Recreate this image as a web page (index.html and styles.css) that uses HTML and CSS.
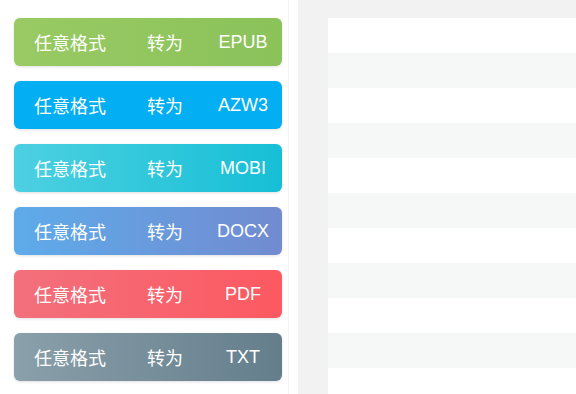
FILE: index.html
```html
<!DOCTYPE html>
<html lang="zh-CN">
<head>
    <meta charset="UTF-8">
    <meta name="viewport" content="width=device-width, initial-scale=1.0">
    <title>格式转换</title>
    <link rel="stylesheet" href="styles.css">
</head>
<body>
    <div class="page">
        <div class="sidebar">
            <div class="buttons">
                <a class="convert epub" href="#"><span class="from">任意格式</span><span class="to">转为</span><span class="format">EPUB</span></a>
                <a class="convert azw3" href="#"><span class="from">任意格式</span><span class="to">转为</span><span class="format">AZW3</span></a>
                <a class="convert mobi" href="#"><span class="from">任意格式</span><span class="to">转为</span><span class="format">MOBI</span></a>
                <a class="convert docx" href="#"><span class="from">任意格式</span><span class="to">转为</span><span class="format">DOCX</span></a>
                <a class="convert pdf" href="#"><span class="from">任意格式</span><span class="to">转为</span><span class="format">PDF</span></a>
                <a class="convert txt" href="#"><span class="from">任意格式</span><span class="to">转为</span><span class="format">TXT</span></a>
            </div>
        </div>
        <div class="main">
            <div class="list">
                <div class="row"></div>
                <div class="row"></div>
                <div class="row"></div>
                <div class="row"></div>
                <div class="row"></div>
                <div class="row"></div>
                <div class="row"></div>
                <div class="row"></div>
                <div class="row"></div>
                <div class="row"></div>
                <div class="row"></div>
            </div>
        </div>
    </div>
</body>
</html>
```

FILE: styles.css
```css
* {
    margin: 0;
    padding: 0;
    box-sizing: border-box;
    font-family: 'Liberation Sans', Arial, 'Noto Sans CJK SC', sans-serif;
}

body {
    background-color: #f2f2f2;
    overflow: hidden;
}

.page {
    display: flex;
    height: 394px;
}

.sidebar {
    width: 298px;
    background-color: #fff;
    flex-shrink: 0;
}

.buttons {
    width: 289px;
    height: 100%;
    border-right: 1px solid #f3f3f3;
    padding: 18px 0 0 14px;
    display: flex;
    flex-direction: column;
    gap: 15px;
}

.convert {
    display: flex;
    align-items: center;
    width: 268px;
    height: 48px;
    padding-left: 20px;
    border-radius: 6px;
    color: #fff;
    text-decoration: none;
    font-size: 18px;
    box-shadow: 0 1px 3px rgba(0, 0, 0, 0.12);
}

.from {
    width: 113px;
}

.to {
    width: 36px;
}

.format {
    flex: 1;
    text-align: center;
    margin-left: 21px;
}

.epub {
    background: linear-gradient(90deg, #99ca64, #8bc25a);
}

.azw3 {
    background: #03aef3;
}

.mobi {
    background: linear-gradient(90deg, #4dd0e1, #16bfd6);
}

.docx {
    background: linear-gradient(90deg, #5eabea, #728bd0);
}

.pdf {
    background: linear-gradient(90deg, #f2707c, #fd5961);
}

.txt {
    background: linear-gradient(90deg, #8aa0ab, #647e8b);
}

.main {
    flex: 1;
    padding: 18px 0 0 30px;
}

.list {
    background-color: #fff;
}

.row {
    height: 35px;
    background-color: #fff;
}

.row:nth-child(even) {
    background-color: #f6f7f7;
}
```
